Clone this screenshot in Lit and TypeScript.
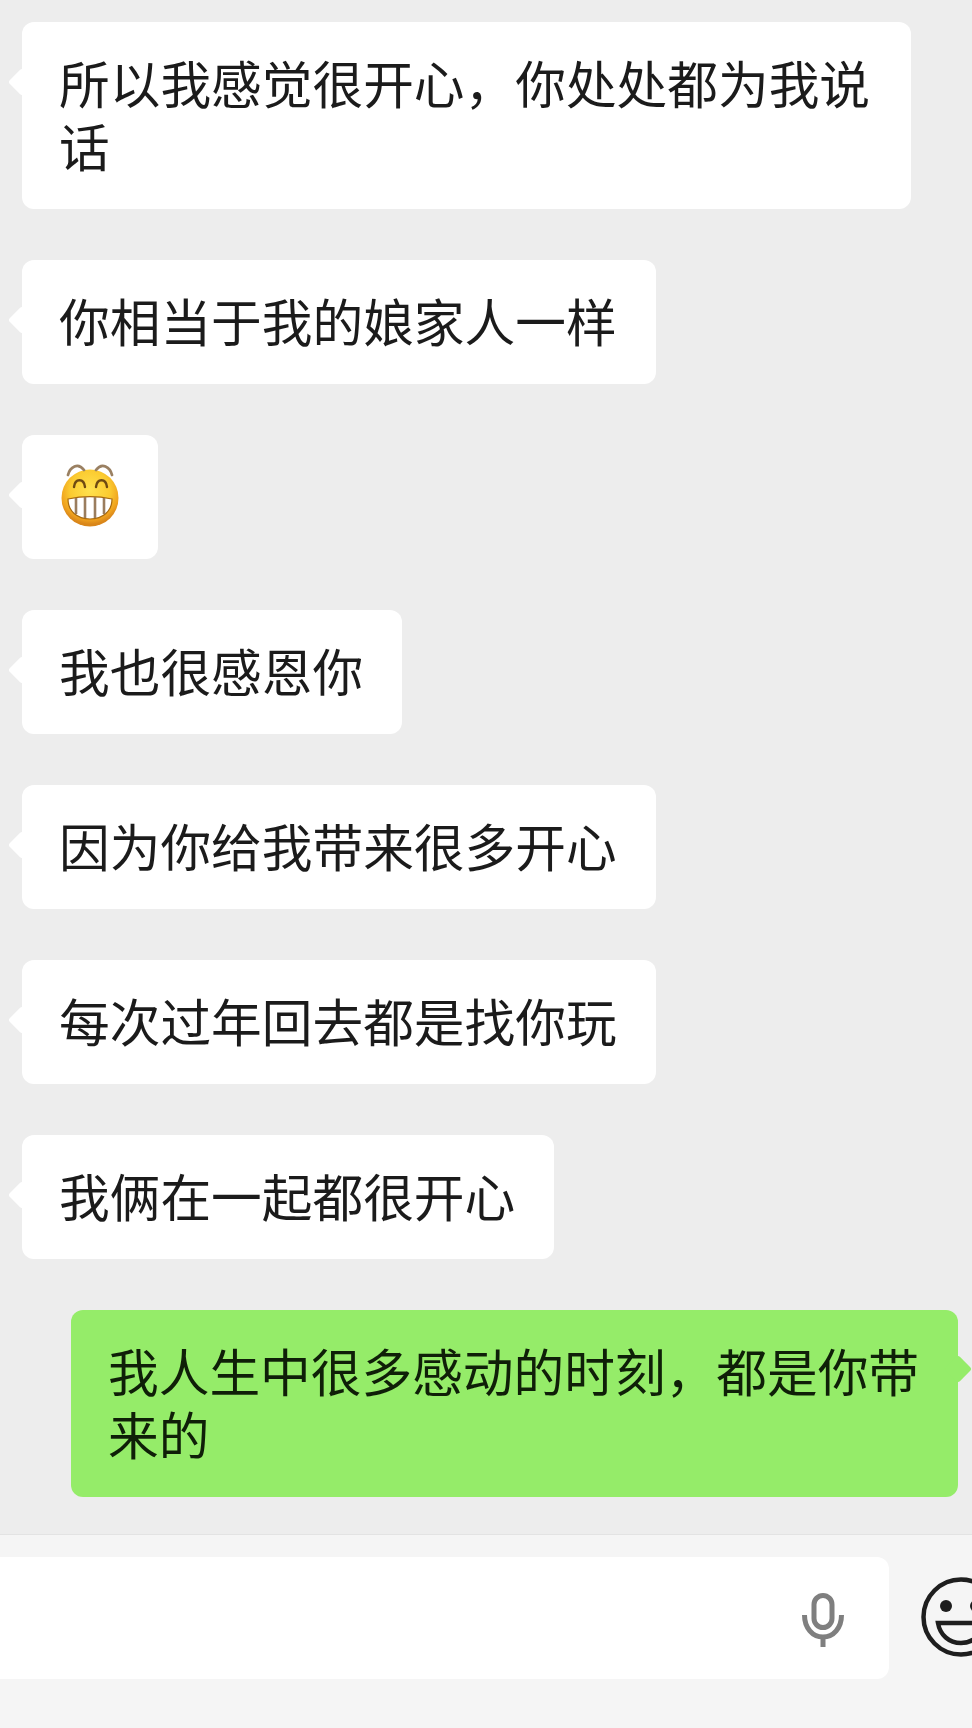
import { LitElement, html, css } from "lit";
import { customElement } from "lit/decorators.js";

const emoji = html`<svg class="emoji" viewBox="0 0 70 72" aria-hidden="true">
  <defs>
    <radialGradient id="f" cx="50%" cy="36%" r="60%">
      <stop offset="0%" stop-color="#ffe24f"/><stop offset="58%" stop-color="#fbcb30"/>
      <stop offset="86%" stop-color="#f0a31f"/><stop offset="100%" stop-color="#d9861a"/>
    </radialGradient>
  </defs>
  <circle cx="35" cy="38" r="28.500" fill="url(#f)"/>
  <path d="M13 15c2-8 10-13 16-5M57 15c-2-8-10-13-16-5" fill="none" stroke="#9a8062" stroke-width="2.800" stroke-linecap="round"/>
  <path d="M19 27c1-9 10-9 11 0M41 27c1-9 10-9 11 0" fill="none" stroke="#6e4a12" stroke-width="2.400" stroke-linecap="round"/>
  <path d="M13 39c14-3 30-3 44 0c0 12-9 20-22 20s-22-8-22-20z" fill="#fff" stroke="#a8690e" stroke-width="1.200"/>
  <path d="M21 38v16M30 37v21M40 37v21M49 38v16" stroke="#9a7d5e" stroke-width="2.600"/>
</svg>`;

@customElement("app-root")
export class AppRoot extends LitElement {
  static styles = css`
    :host {
      display: flex; flex-direction: column; width: 972px; height: 1728px;
      background: #ededed; overflow: hidden;
      font-family: "Noto Sans CJK SC", "Noto Sans", sans-serif; color: #1b1b1b;
    }
    .chat { flex: 1; display: flex; flex-direction: column; gap: 51px; padding: 22px 14px 0 22px; align-items: flex-start; }
    .bubble {
      position: relative; box-sizing: border-box; padding: 29px 39px 32px 37px; border-radius: 12px;
      background: #fff; font-size: 50.700px; line-height: 63px;
    }
    .bubble::before {
      content: ""; position: absolute; left: -10px; top: 50px; width: 20px; height: 20px;
      background: inherit; transform: rotate(45deg); border-radius: 3px;
    }
    .bubble.wide { width: 889px; padding-right: 30px; }
    .me { background: #95ec69; align-self: flex-end; width: 887px; padding-right: 30px; color: #0f1f08; }
    .me::before { left: auto; right: -10px; top: 49px; }
    .pic { display: flex; height: 124px; box-sizing: border-box; width: 136px; padding: 31px 0 0 38px; }
    .emoji { width: 70px; height: 72px; margin: -6px 0 0 -5px; }
    .bar {
      display: flex; align-items: flex-start; height: 194px; box-sizing: border-box;
      border-top: 1px solid #e3e3e3; background: #f5f5f5; padding-top: 22px;
    }
    .input {
      width: 889px; flex: none; height: 122px; background: #fff; border-radius: 0 12px 12px 0;
      display: flex; justify-content: flex-end; align-items: center;
    }
    .mic { width: 42px; height: 54px; margin: 3px 45px 0 0; }
    .smile { flex: none; width: 80px; height: 80px; margin: 20px 0 0 32px; }
  `;

  render() {
    return html`
      <div class="chat">
        <div class="bubble wide">所以我感觉很开心，你处处都为我说话</div>
        <div class="bubble">你相当于我的娘家人一样</div>
        <div class="bubble pic">${emoji}</div>
        <div class="bubble">我也很感恩你</div>
        <div class="bubble">因为你给我带来很多开心</div>
        <div class="bubble">每次过年回去都是找你玩</div>
        <div class="bubble">我俩在一起都很开心</div>
        <div class="bubble me">我人生中很多感动的时刻，都是你带来的</div>
      </div>
      <div class="bar">
        <div class="input">
          <svg class="mic" viewBox="0 0 42 54" fill="none" stroke="#7f7f7f" stroke-width="5">
            <rect x="12" y="2.500" width="18" height="32" rx="9"/>
            <path d="M2.500 22c0 13 8 22 18.500 22s18.500-9 18.500-22M21 44v10"/>
          </svg>
        </div>
        <svg class="smile" viewBox="0 0 80 80" fill="none" stroke="#1e1e1e" stroke-width="4.500">
          <circle cx="40" cy="40" r="37.500"/>
          <circle cx="25" cy="29" r="6" fill="#1e1e1e" stroke="none"/>
          <circle cx="55" cy="29" r="6" fill="#1e1e1e" stroke="none"/>
          <path d="M17 46h46c-2 12-11 20-23 20s-21-8-23-20z"/>
        </svg>
      </div>
    `;
  }
}
